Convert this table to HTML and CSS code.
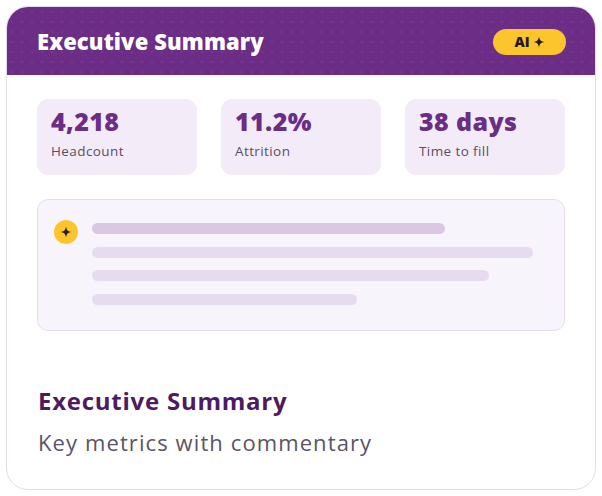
FILE: index.html
```html
<!DOCTYPE html>
<html lang="en">
<head>
<meta charset="utf-8">
<title>Executive Summary</title>
<link rel="stylesheet" href="styles.css">
</head>
<body>
<div class="card">
  <header class="card-header">
    <h1 class="header-title">Executive Summary</h1>
    <span class="badge">AI
      <svg class="badge-star" viewBox="0 0 24 24" aria-hidden="true"><path d="M12 1C12.6 8 16 11.4 23 12C16 12.6 12.6 16 12 23C11.4 16 8 12.6 1 12C8 11.4 11.4 8 12 1Z"/></svg>
    </span>
  </header>
  <div class="card-body">
    <div class="stats">
      <div class="stat">
        <div class="stat-value">4,218</div>
        <div class="stat-label">Headcount</div>
      </div>
      <div class="stat">
        <div class="stat-value">11.2%</div>
        <div class="stat-label">Attrition</div>
      </div>
      <div class="stat">
        <div class="stat-value">38 days</div>
        <div class="stat-label">Time to fill</div>
      </div>
    </div>
    <div class="commentary">
      <span class="ai-icon">
        <svg viewBox="0 0 24 24" aria-hidden="true"><path d="M12 1C12.6 8 16 11.4 23 12C16 12.6 12.6 16 12 23C11.4 16 8 12.6 1 12C8 11.4 11.4 8 12 1Z"/></svg>
      </span>
      <div class="lines">
        <div class="line line-strong w1"></div>
        <div class="line w2"></div>
        <div class="line w3"></div>
        <div class="line w4"></div>
      </div>
    </div>
  </div>
  <footer class="card-footer">
    <h2 class="footer-title">Executive Summary</h2>
    <p class="footer-sub">Key metrics with commentary</p>
  </footer>
</div>
</body>
</html>
```
FILE: styles.css
```css
* { box-sizing: border-box; }
html, body { margin: 0; padding: 0; background: #ffffff; }
body {
  font-family: "Open Sans", "DejaVu Sans", sans-serif;
  padding: 6px;
}
.card {
  width: 590px;
  height: 484px;
  border: 1px solid #e4dcec;
  border-radius: 22px;
  overflow: hidden;
  background: #ffffff;
  display: flex;
  flex-direction: column;
}
.card-header {
  height: 68px;
  flex: none;
  background-color: #6b2d86;
  background-image: radial-gradient(rgba(220, 140, 130, 0.16) 0.6px, transparent 1px);
  background-size: 10px 10px;
  display: flex;
  align-items: center;
  justify-content: space-between;
  padding: 0 29px 0 30px;
}
.header-title {
  margin: 0;
  color: #ffffff;
  font-size: 22px;
  font-weight: 800;
  letter-spacing: 0.1px;
}
.badge {
  width: 73px;
  height: 26px;
  border-radius: 13px;
  background: #fdc52c;
  color: #231828;
  font-size: 14px;
  font-weight: 800;
  display: flex;
  align-items: center;
  justify-content: center;
  gap: 3px;
  margin-top: 1px;
}
.badge-star { width: 12px; height: 12px; fill: #231828; }
.card-body {
  padding: 24px 30px 0 30px;
}
.stats {
  display: grid;
  grid-template-columns: repeat(3, 1fr);
  gap: 24px;
}
.stat {
  height: 76px;
  background: #f3ecf8;
  border-radius: 11px;
  padding: 5px 14px 0 14px;
}
.stat-value {
  color: #6b2d86;
  font-size: 25px;
  font-weight: 800;
  line-height: 34px;
  letter-spacing: 0.4px;
}
.stat-label {
  color: #5a4e66;
  font-size: 13.5px;
  line-height: 20px;
  margin-top: 3px;
  letter-spacing: 0.4px;
}
.commentary {
  margin-top: 24px;
  height: 132px;
  background: #f8f4fb;
  border: 1px solid #e5dbef;
  border-radius: 11px;
  padding: 20px 16px 0 16px;
  display: flex;
  gap: 14px;
}
.ai-icon {
  width: 24px;
  height: 24px;
  flex: none;
  border-radius: 50%;
  background: #fdc52c;
  display: flex;
  align-items: center;
  justify-content: center;
}
.ai-icon svg { width: 12px; height: 12px; fill: #2b1b38; }
.lines {
  flex: 1;
  display: flex;
  flex-direction: column;
  gap: 12.6px;
  padding-top: 3px;
}
.line {
  height: 11px;
  border-radius: 6px;
  background: #e7dcef;
}
.line-strong { background: #d9c7e4; }
.w1 { width: 353px; }
.w2 { width: 441px; }
.w3 { width: 397px; }
.w4 { width: 265px; }
.card-footer {
  margin-top: auto;
  padding: 0 30px 32px 31px;
}
.footer-title {
  margin: 0;
  color: #4d1b5e;
  font-size: 24px;
  font-weight: 700;
  line-height: 32px;
  letter-spacing: 0.75px;
}
.footer-sub {
  margin: 10px 0 0 0;
  color: #5a5466;
  font-size: 22px;
  line-height: 30px;
  letter-spacing: 1.1px;
}
```
